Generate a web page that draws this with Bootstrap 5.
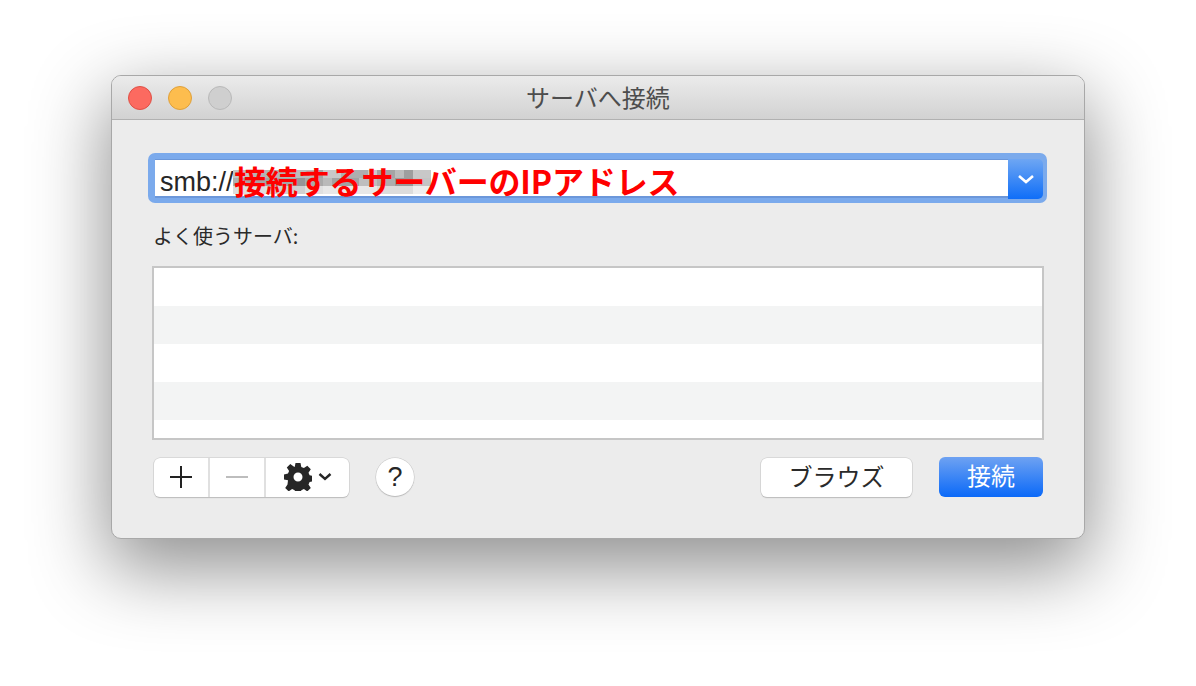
<!DOCTYPE html>
<html lang="ja">
<head>
<meta charset="utf-8">
<title>サーバへ接続</title>
<link href="https://cdn.jsdelivr.net/npm/bootstrap@5.3.0/dist/css/bootstrap.min.css" rel="stylesheet">
<style>
html,body{height:100%;margin:0;background:#fff;overflow:hidden}
body{font-family:"Noto Sans CJK JP","Liberation Sans",sans-serif;color:#222}
.stage{width:1196px;height:686px;padding:75px 0 0 111px}
.mac-win{width:974px;height:464px;border-radius:10px;background:#ececec;border:1px solid #a8a8a8;overflow:hidden;box-shadow:0 26px 76px 4px rgba(0,0,0,.44)}
.mac-title{height:44px;background:linear-gradient(#ebebeb,#d2d2d2);border-bottom:1px solid #b1b1b1;padding-left:16px;gap:16px;position:relative}
.mac-title h1{position:absolute;inset:0;margin:0;text-align:center;font-size:24px;line-height:41px;font-weight:400;color:#4d4d4d}
.tl{width:24px;height:24px;border-radius:50%;border:1px solid}
.tl-r{background:#fc6a60;border-color:#df5046}
.tl-y{background:#fdbd4e;border-color:#dfa03a}
.tl-g{background:#cfcfcf;border-color:#b9b9b9}
.mac-body{padding:33px 41px 0 36px}
.addr{height:50px;border-radius:7px;background:#7baaec;padding:6px 4px 5px 7px;width:899px}
.addr-field{background:#fff;height:39px;font-family:"Liberation Sans",sans-serif;font-size:27px;line-height:45px;padding-left:5px;color:#262626;white-space:nowrap;position:relative;border-top:1px solid #6b97da;border-bottom:2px solid #6b97da}
.blur-bits{position:absolute;left:78px;top:10px;width:198px;height:24px}
.red-note{position:absolute;left:79px;top:0;color:#f00;font-family:"Noto Sans CJK JP",sans-serif;font-weight:700;font-size:32px;line-height:40px;letter-spacing:-.15px}
.addr-btn{width:35px;height:40px;border-radius:0 5px 5px 0;background:linear-gradient(#6ea6f3,#0f6ef8)}
.fav-label{margin:20px 0 0 5px;font-size:20px;line-height:26px;color:#2a2a2a}
.fav-list{width:892px;height:174px;margin:17px 0 0 4px;border:2px solid #c6c6c6;background:#fff;overflow:hidden}
.fav-row{height:38px;background:#fff}
.fav-row:nth-child(even){background:#f3f4f4}
.toolbar{margin:17px 0 0 6px;width:889px}
.seg{height:39px;background:#fff;border-radius:6px;box-shadow:0 0 0 .5px #c5c5c5,0 1px 1px #b5b5b5}
.seg-cell{height:39px;border-right:2px solid #e0e0e0}
.seg-cell:last-child{border-right:0}
.seg-a{width:56px}.seg-b{width:56px}.seg-c{width:83px;gap:6px}
.help{width:38px;height:38px;margin-left:27px;border-radius:50%;background:#fff;box-shadow:0 0 0 .5px #c5c5c5,0 1px 1px #b5b5b5;font-family:"Liberation Sans",sans-serif;font-size:27px;line-height:38px;text-align:center;color:#262626}
.mbtn{height:39px;border-radius:6px;font-size:24px;line-height:36px;text-align:center}
.mbtn-w{width:151px;background:#fff;color:#2a2a2a;box-shadow:0 0 0 .5px #c5c5c5,0 1px 1px #b5b5b5}
.mbtn-b{width:104px;height:40px;margin-left:27px;background:linear-gradient(#6ea2f2,#0a69f8);color:#fff}
</style>
</head>
<body>
<div class="stage">
  <div class="mac-win">
    <div class="mac-title d-flex align-items-center">
      <span class="tl tl-r"></span><span class="tl tl-y"></span><span class="tl tl-g"></span>
      <h1>サーバへ接続</h1>
    </div>
    <div class="mac-body">
      <div class="addr d-flex">
        <div class="addr-field flex-grow-1">smb://<svg class="blur-bits" viewBox="0 0 198 24" shape-rendering="crispEdges">
            <rect x="0" y="0" width="18" height="8" fill="#c4c4c4"/><rect x="18" y="0" width="45" height="8" fill="#b4b4b4"/><rect x="63" y="0" width="18" height="8" fill="#bcbcbc"/><rect x="81" y="0" width="9" height="8" fill="#a4a4a4"/><rect x="90" y="0" width="18" height="8" fill="#c8c8c8"/><rect x="108" y="0" width="27" height="8" fill="#aeaeae"/><rect x="135" y="0" width="9" height="8" fill="#cccccc"/><rect x="144" y="0" width="18" height="8" fill="#a4a4a4"/><rect x="162" y="0" width="9" height="8" fill="#bcbcbc"/><rect x="171" y="0" width="9" height="8" fill="#9e9e9e"/><rect x="180" y="0" width="18" height="8" fill="#c8c8c8"/>
            <rect x="0" y="8" width="9" height="8" fill="#b0b0b0"/><rect x="9" y="8" width="54" height="8" fill="#a4a4a4"/><rect x="63" y="8" width="9" height="8" fill="#969696"/><rect x="72" y="8" width="18" height="8" fill="#aaaaaa"/><rect x="90" y="8" width="9" height="8" fill="#bababa"/><rect x="99" y="8" width="27" height="8" fill="#a2a2a2"/><rect x="126" y="8" width="18" height="8" fill="#bebebe"/><rect x="144" y="8" width="18" height="8" fill="#aeaeae"/><rect x="162" y="8" width="18" height="8" fill="#9a9a9a"/><rect x="180" y="8" width="18" height="8" fill="#c4c4c4"/>
            <rect x="0" y="16" width="36" height="8" fill="#dedede"/><rect x="36" y="16" width="36" height="8" fill="#d0d0d0"/><rect x="72" y="16" width="18" height="8" fill="#e0e0e0"/><rect x="90" y="16" width="54" height="8" fill="#e8e8e8"/><rect x="144" y="16" width="36" height="8" fill="#dcdcdc"/><rect x="180" y="16" width="18" height="8" fill="#eeeeee"/>
        </svg><span class="red-note">接続するサーバーのIPアドレス</span></div>
        <div class="addr-btn d-flex align-items-center justify-content-center">
          <svg width="18" height="12" viewBox="0 0 18 12"><path d="M2 3l7 6 7-6" fill="none" stroke="#fff" stroke-width="2.6"/></svg>
        </div>
      </div>
      <div class="fav-label">よく使うサーバ:</div>
      <div class="fav-list">
        <div class="fav-row"></div><div class="fav-row"></div><div class="fav-row"></div><div class="fav-row"></div><div class="fav-row"></div>
      </div>
      <div class="toolbar d-flex align-items-center">
        <div class="seg d-flex">
          <div class="seg-cell seg-a d-flex align-items-center justify-content-center">
            <svg width="24" height="24" viewBox="0 0 24 24"><path d="M1 12h22M12 1v22" stroke="#222" stroke-width="2"/></svg>
          </div>
          <div class="seg-cell seg-b d-flex align-items-center justify-content-center">
            <svg width="24" height="4" viewBox="0 0 24 4"><path d="M1 2h22" stroke="#bdbdbd" stroke-width="2"/></svg>
          </div>
          <div class="seg-cell seg-c d-flex align-items-center justify-content-center">
            <svg width="28" height="28" viewBox="0 0 28 28"><path fill="#262626" fill-rule="evenodd" d="M11.5 0h5l.8 4 2.600 1.100 3.400-2.300 3.500 3.500-2.300 3.400 1.100 2.600 4 .8v5l-4 .8-1.100 2.600 2.300 3.400-3.500 3.500-3.400-2.300-2.600 1.100-.8 4h-5l-.8-4-2.600-1.100-3.400 2.300-3.500-3.500 2.300-3.400L4 17.200l-4-.8v-5l4-.8 1.100-2.600-2.300-3.400 3.500-3.500 3.400 2.300L10.700 4zM14 9.500a4.500 4.500 0 1 0 0 9 4.500 4.500 0 0 0 0-9z"/></svg>
            <svg width="14" height="10" viewBox="0 0 14 10"><path d="M1.500 2l5.500 5 5.500-5" fill="none" stroke="#262626" stroke-width="2.400"/></svg>
          </div>
        </div>
        <div class="help">?</div>
        <div class="mbtn mbtn-w ms-auto">ブラウズ</div>
        <div class="mbtn mbtn-b">接続</div>
      </div>
    </div>
  </div>
</div>
</body>
</html>
